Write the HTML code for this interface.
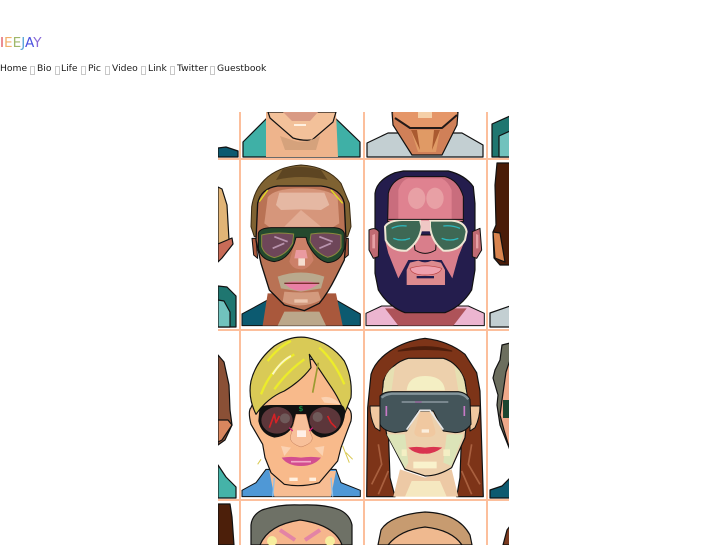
<!DOCTYPE html>
<html><head><meta charset="utf-8">
<style>
html,body{margin:0;padding:0;background:#fff;width:727px;height:545px;overflow:hidden}
body{position:relative;font-family:"DejaVu Sans",sans-serif;color:#111}
.logo{position:absolute;left:0;top:36px;font-size:13.6px;line-height:15px;white-space:nowrap}
.n{position:absolute;top:62px;font-size:9.2px;line-height:14px;white-space:nowrap;color:#1a1a1a}
.b{position:absolute;top:66px;width:3px;height:7px;border:1px solid #c8c8c8}
svg{position:absolute;left:0;top:0}
</style></head><body>
<div class="logo"><span style="color:#e0565f">I</span><span style="color:#f2b06a">E</span><span style="color:#9fb86a">E</span><span style="color:#55a5d8">J</span><span style="color:#4a52e0">A</span><span style="color:#8a6ad8">Y</span></div>
<span class="n" style="left:0">Home</span><i class="b" style="left:30px"></i>
<span class="n" style="left:37px">Bio</span><i class="b" style="left:55px"></i>
<span class="n" style="left:61px">Life</span><i class="b" style="left:81px"></i>
<span class="n" style="left:88px">Pic</span><i class="b" style="left:105px"></i>
<span class="n" style="left:112px">Video</span><i class="b" style="left:141px"></i>
<span class="n" style="left:148px">Link</span><i class="b" style="left:170px"></i>
<span class="n" style="left:177px">Twitter</span><i class="b" style="left:210px"></i>
<span class="n" style="left:217px">Guestbook</span>
<svg width="727" height="545" viewBox="0 0 727 545">
<defs><clipPath id="c"><rect x="218" y="112" width="291" height="433"/></clipPath></defs>
<g clip-path="url(#c)" stroke-linejoin="round">
<!-- ROW 1 -->
<g stroke="#111" stroke-width="1.2">
<path d="M218 148L226 147L238 151V157H218Z" fill="#0d5a70"/>
<path d="M243 157V142L270 115H332L360 142V157Z" fill="#3fb0a6"/>
<path d="M266 112H336L338 157H266Z" fill="#eeb48c" stroke="none"/>
<path d="M268 112L270 118L293 138Q302 141 312 140L333 122L336 112Z" fill="#f3c19a"/>
<path d="M367 157V143L388 133H462L483 145V157Z" fill="#c3cfd2"/>
<path d="M392 112L393 125L412 155H442L457 125L458 112Z" fill="#d08058"/>
<path d="M492 157V124L510 116V157Z" fill="#1f7670"/>
<path d="M499 157V136L510 131V157Z" fill="#71c2bd"/>
</g>
<path d="M283 112H318L310 121H292Z" fill="#d99a84"/>
<rect x="294" y="124" width="12" height="2" fill="#fff0e0"/>
<path d="M280 136L295 141Q305 144 320 136L316 150H285Z" fill="#d5a27c"/>
<path d="M395 118L410 128H442L457 115L457 112H393Z" fill="#e59668"/>
<path d="M395 118L410 128H442L457 115" fill="none" stroke="#241a18" stroke-width="2"/>
<rect x="418" y="112" width="14" height="6" fill="#f5d0a8"/>
<path d="M411 130H440L436 152H418Z" fill="#e09a65"/>
<path d="M411 130L417 130L420 150ZM440 130L434 130L432 150Z" fill="#aa5a30"/>
<!-- ROW 2 slivers -->
<g stroke="#111" stroke-width="1.2">
<path d="M218 187L222 189L227 205L229 240L218 244Z" fill="#e1b476"/>
<path d="M218 244L232 238L233 244L222 258L218 262Z" fill="#c86b57"/>
<path d="M218 286L227 287L236 296V327H218Z" fill="#1f7670"/>
<path d="M218 300L224 301L230 312V327H218Z" fill="#71c2bd"/>
<path d="M510 163H497L495 185L496 225L493 232L494 258L500 265L510 265Z" fill="#4a1c08"/>
<path d="M493 232L500 233L505 262L495 258Z" fill="#d9844e"/>
<path d="M490 327V313L510 306V327Z" fill="#c3cfd2"/>
</g>
<!-- FACE 1 -->
<g transform="translate(241,160) scale(.3333)">
<path d="M3 497V462L80 420H285L358 462V497Z" fill="#0c5a70" stroke="#111" stroke-width="3"/>
<path d="M80 400L65 497H305L285 400Z" fill="#a9583c"/>
<path d="M110 497L130 455H235L255 497Z" fill="#bba78a"/>
<path d="M30 200L32 140Q40 90 70 60Q110 20 180 15Q260 20 300 70L325 130L330 200L320 230H40Z" fill="#7f6232" stroke="#3a2a12" stroke-width="3"/>
<path d="M125 28Q180 12 240 30L260 60Q180 42 105 60Z" fill="#5d4522"/>
<path d="M33 235L45 235L50 295L38 285ZM322 235L312 235L310 295L322 285Z" fill="#a9583c" stroke="#111" stroke-width="3"/>
<path d="M45 240L50 130Q60 85 110 78H240Q300 85 310 130L315 240L310 300L285 350Q260 400 235 430L190 452L130 435L85 390L60 310Z" fill="#b97254" stroke="#111" stroke-width="4"/>
<path d="M70 190L80 112Q100 85 180 85Q260 85 290 112L295 190L270 205H90Z" fill="#d6967b"/>
<path d="M105 135L115 98H250L265 135L240 150L180 148L120 150Z" fill="#e5b8a3"/>
<path d="M130 200L180 150L240 200Z" fill="#e2ad95"/>
<path d="M55 125L80 90M270 90L305 130" stroke="#dfdf20" stroke-width="4" fill="none"/>
<path d="M110 350Q180 325 250 350L240 385L180 395L120 385Z" fill="#b9a98d"/>
<path d="M130 395Q180 400 232 395L240 420Q180 450 125 425Z" fill="#d39a7e"/>
<rect x="160" y="418" width="40" height="10" fill="#ecc6ae"/>
<path d="M130 370Q150 362 175 365Q200 362 235 370Q205 392 180 392Q150 392 130 370Z" fill="#e97fa5"/>
<path d="M130 370H235" stroke="#7a2e2e" stroke-width="4"/>
<path d="M165 232H195L218 300Q200 330 180 328Q155 328 145 305Z" fill="#cc8068"/>
<path d="M165 270H195L200 295H160Z" fill="#ea9aa0"/>
<rect x="172" y="295" width="20" height="22" fill="#f5ddd0"/>
<path d="M52 220Q55 205 90 203H280Q305 205 310 220V265Q300 305 260 308Q225 300 200 250L195 232H165L160 250Q140 300 100 305Q60 300 52 265Z" fill="#24492e" stroke="#111" stroke-width="3"/>
<path d="M62 225Q100 215 158 222L155 250Q135 285 100 293Q70 285 62 260Z" fill="#6e4659" stroke="#8a8a3c" stroke-width="3"/>
<path d="M210 222Q260 215 300 225V262Q290 285 260 292Q225 280 207 245Z" fill="#6e4659" stroke="#8a8a3c" stroke-width="3"/>
<path d="M100 230L140 245M95 265L130 250M235 230L275 245M235 265L270 250" stroke="#b893ad" stroke-width="5"/>
</g>
<!-- FACE 2 -->
<g transform="translate(365,160) scale(.3333)">
<path d="M3 497V460L50 438H310L358 460V497Z" fill="#ecb5d0" stroke="#111" stroke-width="3"/>
<path d="M60 445L100 497H265L305 445Z" fill="#ae5359"/>
<path d="M30 230V100Q35 60 90 38L115 33H250Q300 45 325 80L330 130V330L320 390Q290 440 240 458H120Q70 440 40 390L30 340Z" fill="#241d4d" stroke="#111" stroke-width="3.500"/>
<path d="M12 210Q30 200 42 215L40 290L25 295L12 270Z" fill="#c06a72" stroke="#111" stroke-width="3"/>
<path d="M322 215L345 205L350 270L335 295L322 290Z" fill="#c06a72" stroke="#111" stroke-width="3"/>
<path d="M22 225L30 222V265H22ZM333 222L340 225V265H333Z" fill="#e6a0a5"/>
<path d="M68 185L70 100Q80 60 120 50H240Q280 60 295 110V185Z" fill="#c96d7d" stroke="#111" stroke-width="3"/>
<path d="M100 185V90Q110 60 130 55H230Q250 65 260 90V185Z" fill="#df8290"/>
<ellipse cx="155" cy="115" rx="26" ry="32" fill="#e8a0a5"/><ellipse cx="210" cy="115" rx="26" ry="32" fill="#e8a0a5"/>
<path d="M60 240H300L280 290L262 355L230 300H130L100 355L70 280Z" fill="#d97e8b"/>
<path d="M125 375V330L135 308L160 302Q180 312 200 302L228 308L240 330V375Z" fill="#dd8a8e"/>
<path d="M135 325Q180 310 230 325Q225 345 180 345Q140 345 135 325Z" fill="#efa0ad" stroke="#b84040" stroke-width="2"/>
<rect x="155" y="348" width="52" height="7" fill="#241d4d"/>
<path d="M145 225L150 270Q180 290 212 270L215 225Z" fill="#d97e8b" stroke="#111" stroke-width="3"/>
<path d="M60 200Q70 182 110 180H165L170 200Q165 245 125 272Q80 275 62 240Z" fill="#3e6854" stroke="#efe6d4" stroke-width="6"/>
<path d="M195 182H260Q300 185 305 215L300 240Q280 275 235 272Q200 245 195 200Z" fill="#3e6854" stroke="#efe6d4" stroke-width="6"/>
<rect x="167" y="182" width="28" height="32" fill="#f0c8c5"/>
<path d="M70 178H295" stroke="#111" stroke-width="3"/>
<path d="M80 205Q100 195 125 198M235 198Q260 195 285 205M85 235Q110 245 135 235M230 235Q255 245 280 235" stroke="#2dbac0" stroke-width="4" fill="none"/>
</g>
<!-- ROW 3 slivers -->
<g stroke="#111" stroke-width="1.2">
<path d="M218 355L224 362L229 385L230 410L232 425L225 440L218 445Z" fill="#8a5036"/>
<path d="M218 420L228 420L232 425L222 440L218 442Z" fill="#d8865e"/>
<path d="M218 465L226 477L236 487V498H218Z" fill="#45b3a8"/>
<path d="M510 343L502 345L500 360L495 370L493 378L498 395L497 405L500 425L510 450Z" fill="#6c6e5e"/>
<path d="M510 360L506 372L502 400L500 415L504 430L510 450Z" fill="#efa98a"/>
<rect x="503" y="400" width="7" height="18" fill="#1c4630" stroke="none"/>
<path d="M490 498V490L502 486L510 478V498Z" fill="#0d5a70"/>
</g>
<!-- FACE 3 -->
<g transform="translate(241,331) scale(.3333)">
<path d="M3 497V478L45 455L75 415H285L300 455L358 478V497Z" fill="#4f98d6" stroke="#111" stroke-width="3"/>
<path d="M85 420L100 497H270L285 420Z" fill="#f7bd93"/>
<path d="M100 440L95 497M270 440L275 497" stroke="#8ec0ea" stroke-width="4"/>
<path d="M30 230Q20 240 30 280L65 340L72 380L90 425L130 460Q180 470 235 455L290 390L300 350L330 270Q335 240 320 230L300 100L180 80L60 160Z" fill="#f8ba8b" stroke="#111" stroke-width="3.500"/>
<path d="M45 250Q20 200 30 150Q45 90 100 45Q150 12 200 20Q270 35 310 90Q335 140 330 200L310 250Q300 210 265 160Q245 130 205 70L210 110Q180 150 130 180Q80 200 45 250Z" fill="#d9ca56" stroke="#111" stroke-width="3.500"/>
<path d="M60 190Q90 110 160 70M100 175Q140 120 190 85M150 30Q110 50 80 90M235 50Q280 90 310 160" stroke="#ecec2a" stroke-width="7" fill="none"/>
<path d="M95 130Q120 90 150 75" stroke="#fbf7c0" stroke-width="6" fill="none"/>
<path d="M232 95L215 185" stroke="#9a9a30" stroke-width="5" fill="none"/>
<path d="M240 200Q270 190 300 220L250 215Z" fill="#fbd2b2"/>
<path d="M55 235Q60 222 90 222H300Q320 228 308 270Q295 315 240 320Q205 310 200 270L195 250H165L160 270Q150 315 100 320Q60 310 52 270Z" fill="#111"/>
<ellipse cx="108" cy="268" rx="47" ry="40" fill="#5c363a"/><ellipse cx="252" cy="268" rx="47" ry="40" fill="#5c363a"/>
<circle cx="132" cy="262" r="15" fill="#6f5a5a"/><circle cx="230" cy="258" r="15" fill="#6f5a5a"/>
<path d="M85 290L100 250L105 275L115 255M260 255L270 275L285 290" stroke="#d42226" stroke-width="5" fill="none"/>
<text x="172" y="240" font-size="22" font-weight="bold" fill="#10803e" font-family="DejaVu Sans, sans-serif">$</text>
<path d="M165 250H195L210 310Q225 335 180 348Q140 335 150 310Z" fill="#f8c09a" stroke="#c07a58" stroke-width="1.500"/>
<rect x="168" y="298" width="27" height="20" fill="#fff0e8"/>
<path d="M145 290L155 300M205 300L215 290" stroke="#d3207a" stroke-width="4"/>
<path d="M120 345L150 350L130 375ZM220 350L250 345L245 375Z" fill="#fbd2b2"/>
<path d="M122 380Q150 375 180 380Q210 375 240 380Q220 405 180 405Q140 405 122 380Z" fill="#d34e8f"/>
<path d="M150 392H210" stroke="#f3a7c6" stroke-width="5"/>
<path d="M145 440H170V450H145ZM205 440H225V450H205Z" fill="#fff0e0"/>
<path d="M305 345L325 395M315 365L335 385M50 400L60 385" stroke="#d9c950" stroke-width="3" fill="none"/>
</g>
<!-- FACE 4 -->
<g transform="translate(365,331) scale(.3333)">
<path d="M5 497L8 230L18 130Q30 90 75 60Q120 30 180 22Q250 30 300 70L335 125L345 180L355 497H275L285 440L290 300H70L75 440L90 497Z" fill="#7d3418" stroke="#111" stroke-width="3.500"/>
<path d="M100 60Q180 35 260 60Q180 50 100 60Z" fill="#4d1e0c" stroke="#4d1e0c" stroke-width="4"/>
<path d="M20 460L50 400L40 340M40 490L70 420M345 460L310 400L320 340M320 490L290 420" stroke="#a9603f" stroke-width="5" fill="none"/>
<path d="M15 225H45V300L30 290Q15 260 15 225ZM345 225H315V300L330 290Q345 260 345 225Z" fill="#f0c8a0" stroke="#111" stroke-width="3"/>
<path d="M105 415L85 497H280L260 415L180 440Z" fill="#edc9a5"/>
<path d="M140 450H225L245 497H120Z" fill="#f5e8c0"/>
<path d="M50 220L55 150Q80 95 130 82H235Q280 95 300 150L310 220L300 320L260 410Q220 435 180 435L120 415L65 310Z" fill="#edd0ac" stroke="#111" stroke-width="3.500"/>
<path d="M52 190L60 140Q70 115 90 105L78 190ZM305 190L295 140Q285 115 268 105L282 190Z" fill="#e6e0b2"/>
<path d="M125 178Q130 135 180 135Q235 135 240 178Z" fill="#f4efc4"/>
<path d="M65 310H120L130 395L120 412ZM295 310H245L235 395L260 405Z" fill="#dce4b8"/>
<path d="M110 355H125V375H110ZM235 355H255V375H235Z" fill="#f4efc4"/>
<path d="M145 392H215V412H145Z" fill="#f9f2cc"/>
<path d="M45 195Q55 183 80 182H280Q305 185 315 205L318 280Q300 305 270 305L235 300L205 240H160L125 300L90 305Q55 300 45 280Z" fill="#44555a" stroke="#111" stroke-width="3"/>
<path d="M50 200Q60 190 80 188H280Q300 190 310 205" fill="none" stroke="#84949a" stroke-width="7"/>
<path d="M110 213H250" stroke="#aeb9c2" stroke-width="3"/>
<path d="M150 213H170" stroke="#c779c6" stroke-width="3"/>
<path d="M64 225V255M298 225V255" stroke="#c779c6" stroke-width="5"/>
<path d="M125 296L165 238H195L235 296" fill="none" stroke="#e8e8e8" stroke-width="5"/>
<path d="M165 243H195L210 295Q218 320 180 318Q140 320 150 295Z" fill="#f0c8a0"/>
<rect x="170" y="295" width="22" height="10" fill="#fbeedd"/>
<path d="M130 350Q155 345 180 350Q205 345 232 350Q205 370 180 368Q150 370 130 350Z" fill="#d93450"/>
</g>
<!-- ROW 4 -->
<g stroke="#111" stroke-width="1.2">
<path d="M218 504H230L232 517L234 545H218Z" fill="#4c1f0a"/>
<path d="M251 545V525Q252 515 262 510Q280 504 300 505Q325 504 340 510Q350 515 352 525V545Z" fill="#6e7166"/>
<path d="M260 545Q268 525 300 520Q335 525 342 545Z" fill="#f6b68d"/>
<path d="M378 545L381 530Q390 515 425 512Q458 513 470 535L472 545Z" fill="#c79b70"/>
<path d="M388 545Q400 530 425 527Q452 530 462 545Z" fill="#efb98f"/>
<path d="M503 545L507 530L510 526V545Z" fill="#7a3a20"/>
</g>
<path d="M280 530L295 540M320 530L305 540" stroke="#e384a5" stroke-width="4"/>
<circle cx="272" cy="541" r="5" fill="#f7ee9f"/><circle cx="330" cy="541" r="5" fill="#f7ee9f"/>
<!-- grid lines -->
<g fill="#fcbf9c">
<rect x="239" y="112" width="2" height="433"/>
<rect x="363" y="112" width="2" height="433"/>
<rect x="486" y="112" width="2" height="433"/>
<rect x="218" y="158" width="291" height="2"/>
<rect x="218" y="329" width="291" height="2"/>
<rect x="218" y="499" width="291" height="2"/>
</g>
</g>
</svg>
</body></html>
